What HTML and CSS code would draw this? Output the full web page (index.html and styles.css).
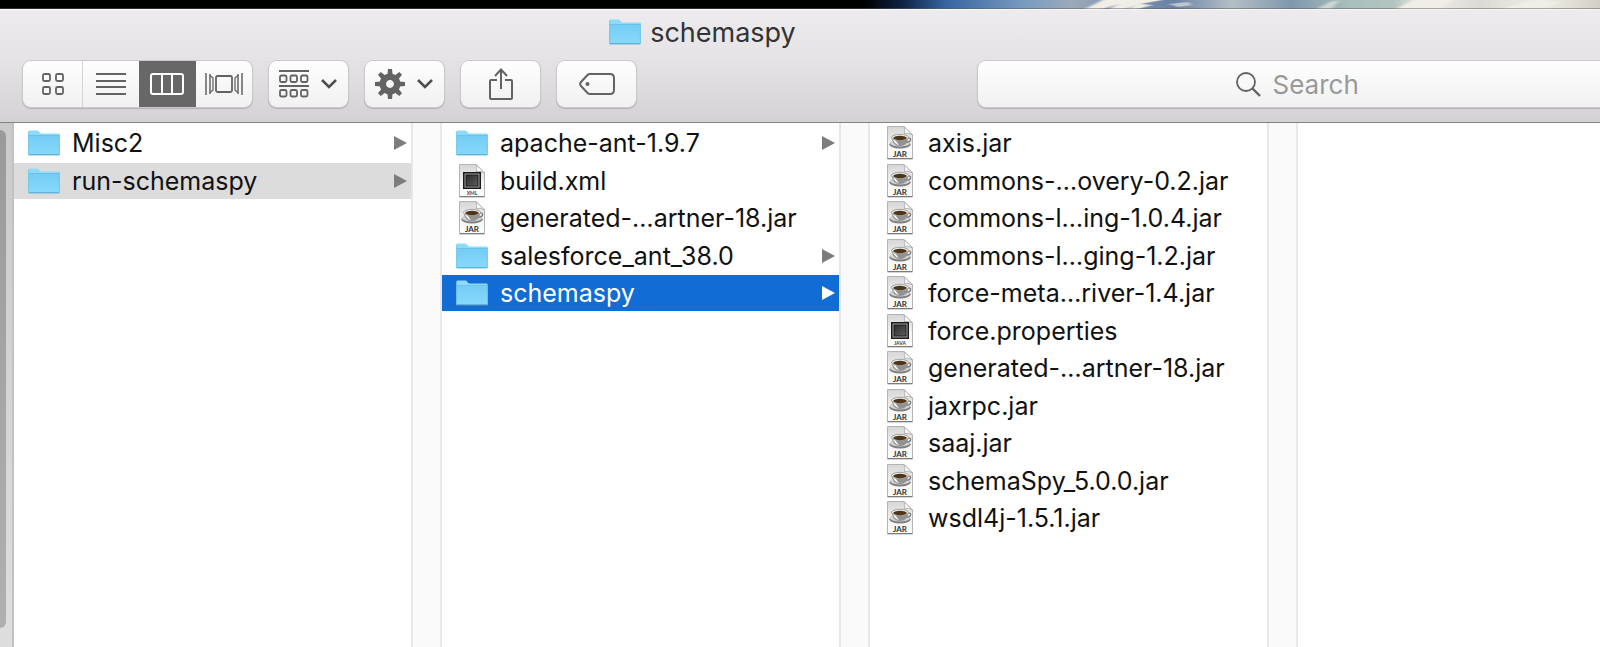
FILE: index.html
```html
<!DOCTYPE html>
<html lang="en">
<head>
  <meta charset="UTF-8">
  <meta name="viewport" content="width=device-width, initial-scale=1.0">
  <title>schemaspy</title>
  <link rel="stylesheet" href="styles.css">
</head>
<body>

  <!-- shared icons -->
  <svg class="sprite" aria-hidden="true">
    <defs>
      <linearGradient id="folderFill" x1="0" y1="0" x2="0" y2="1">
        <stop offset="0" stop-color="#74cdf5"/>
        <stop offset="1" stop-color="#87d9fa"/>
      </linearGradient>
      <linearGradient id="pageFill" x1="0" y1="0" x2="0" y2="1">
        <stop offset="0" stop-color="#d6d6d6"/>
        <stop offset="0.6" stop-color="#f4f4f4"/>
        <stop offset="1" stop-color="#ffffff"/>
      </linearGradient>
      <linearGradient id="chipFill" x1="0" y1="0" x2="1" y2="1">
        <stop offset="0" stop-color="#2c2c2c"/>
        <stop offset="1" stop-color="#5c5c5c"/>
      </linearGradient>
    </defs>
    <symbol id="folder" viewBox="0 0 32 26">
      <path d="M0.5 24V1.8Q0.5 0.5 1.8 0.5H9.5Q10.3 0.5 10.8 1.2L12 2.8Q12.5 3.5 13.5 3.5H30.5Q31.5 3.5 31.5 4.5V24Q31.5 25 30.5 25H1.5Q0.5 25 0.5 24Z" fill="#90daf9"/>
      <path d="M0.5 6H31.5V24Q31.5 25 30.5 25H1.5Q0.5 25 0.5 24Z" fill="url(#folderFill)"/>
      <path d="M0.5 5.5H31.5" stroke="#62bde6" stroke-width="0.8"/>
      <path d="M0.5 24.8H31.5" stroke="#56abd2" stroke-width="1.2"/>
      <path d="M0.6 1.5V24.5M31.4 4.5V24.5" stroke="#6cc3ea" stroke-width="0.8"/>
    </symbol>
    <symbol id="page" viewBox="0 0 26 34">
      <path d="M0.5 0.5H17L25.5 9V32.5H0.5Z" fill="url(#pageFill)" stroke="#b4b4b4"/>
      <path d="M0.5 32.7H25.5" stroke="#777" stroke-width="1.2"/>
      <path d="M17 0.5Q18.5 4.5 17.3 7.5Q21 6.3 25.5 9Z" fill="#fff" stroke="#a6a6a6" stroke-width="0.8"/>
    </symbol>
    <symbol id="jar" viewBox="0 0 26 34">
      <use href="#page"/>
      <ellipse cx="13" cy="18.2" rx="10.6" ry="4.3" fill="#7e7e7e"/>
      <ellipse cx="13" cy="17" rx="10" ry="3.6" fill="#d2d2d2"/>
      <path d="M20 12Q24.2 11.4 23.6 14Q22.8 16.2 18.5 16.4" fill="none" stroke="#777" stroke-width="1.3"/>
      <path d="M4.5 11Q5.5 20 13 20Q20.5 20 21.5 11Z" fill="#929292"/>
      <path d="M5.5 13Q8 18.5 12 19Q8.8 16 8.5 13Z" fill="#f6f6f6"/>
      <ellipse cx="13" cy="11.5" rx="8.5" ry="3.2" fill="#ededed" stroke="#858585" stroke-width="0.7"/>
      <ellipse cx="13" cy="12" rx="6.8" ry="2.2" fill="#4e3517"/>
      <text x="13" y="30.8" class="tag-text">JAR</text>
    </symbol>
    <symbol id="chip" viewBox="0 0 26 34">
      <use href="#page"/>
      <rect x="4" y="8" width="18" height="17" fill="#1a1a1a"/>
      <rect x="6" y="10" width="14" height="13" fill="none" stroke="#a5a5a5"/>
      <rect x="7.5" y="11.5" width="11" height="10" fill="url(#chipFill)"/>
    </symbol>
    <symbol id="xml" viewBox="0 0 26 34">
      <use href="#chip"/>
      <text x="13" y="30.5" class="small-text">XML</text>
    </symbol>
    <symbol id="java" viewBox="0 0 26 34">
      <use href="#chip"/>
      <text x="13" y="30.5" class="small-text">JAVA</text>
    </symbol>
    <symbol id="chevron" viewBox="0 0 18 12">
      <path d="M2 2L9 9L16 2" fill="none" stroke="#4f4f4f" stroke-width="2.6"/>
    </symbol>
  </svg>

  <div class="desktop">
    <svg viewBox="0 0 740 9" preserveAspectRatio="none" aria-hidden="true">
      <defs>
        <linearGradient id="sky">
          <stop offset="0" stop-color="#000"/>
          <stop offset="0.05" stop-color="#0d2140"/>
          <stop offset="0.11" stop-color="#3564a0"/>
          <stop offset="0.22" stop-color="#7a9cc2"/>
          <stop offset="0.28" stop-color="#9ba9ba"/>
          <stop offset="0.42" stop-color="#6a82a6"/>
          <stop offset="0.5" stop-color="#b4bfc6"/>
          <stop offset="0.58" stop-color="#7f98ac"/>
          <stop offset="0.66" stop-color="#a9bfbd"/>
          <stop offset="0.72" stop-color="#b3c5bf"/>
          <stop offset="0.76" stop-color="#efeeea"/>
          <stop offset="0.84" stop-color="#dcdad4"/>
          <stop offset="0.92" stop-color="#f0efe6"/>
          <stop offset="1" stop-color="#d2cfc6"/>
        </linearGradient>
        <filter id="soft"><feGaussianBlur stdDeviation="2 0.5"/></filter>
      </defs>
      <rect width="740" height="9" fill="url(#sky)"/>
      <g filter="url(#soft)" fill="#f0eee6">
        <path d="M222 9L240 0H300L278 4L262 9H246L256 4L240 9ZM264 9L278 4L290 5L275 9Z"/>
        <path d="M306 4L326 2L330 5L316 7ZM455 9L468 2L478 0L470 9Z" opacity="0.6"/>
        <path d="M535 9L552 0H592L580 9ZM640 9L662 3L700 2L680 9Z"/>
      </g>
    </svg>
  </div>

  <header class="window-header">
    <div class="title">
      <svg class="folder-icon" aria-hidden="true"><use href="#folder"/></svg>
      <h1>schemaspy</h1>
    </div>

    <div class="toolbar">
      <div class="view-switch">
        <button type="button" class="view-icons" aria-label="Icon view">
          <svg width="22" height="22" viewBox="0 0 22 22" fill="none" stroke="#636363" stroke-width="1.8">
            <rect x="1" y="1" width="7" height="7" rx="1.5"/>
            <rect x="14" y="1" width="7" height="7" rx="1.5"/>
            <rect x="1" y="14" width="7" height="7" rx="1.5"/>
            <rect x="14" y="14" width="7" height="7" rx="1.5"/>
          </svg>
        </button>
        <button type="button" aria-label="List view">
          <svg width="30" height="22" viewBox="0 0 30 22" stroke="#636363" stroke-width="2">
            <path d="M0 1H30M0 8H30M0 14H30M0 21H30"/>
          </svg>
        </button>
        <button type="button" class="active" aria-label="Column view" aria-pressed="true">
          <svg width="34" height="22" viewBox="0 0 34 22" fill="none" stroke="#fff" stroke-width="2">
            <rect x="1" y="1" width="32" height="20" rx="2"/>
            <path d="M12 1V21M22 1V21"/>
          </svg>
        </button>
        <button type="button" aria-label="Cover Flow view">
          <svg width="38" height="22" viewBox="0 0 38 22" fill="none" stroke="#636363" stroke-width="1.8">
            <rect x="11" y="3" width="16" height="16" rx="1.5"/>
            <path d="M1 0V22M5 1V21M37 0V22M33 1V21" stroke-width="1.5"/>
            <path d="M5 2.5L8 5V17L5 19.5M33 2.5L30 5V17L33 19.5" stroke-width="1.3"/>
          </svg>
        </button>
      </div>

      <button type="button" class="tool" aria-label="Arrange items">
        <svg width="30" height="28" viewBox="0 0 30 28" fill="none" stroke="#636363" stroke-width="1.8">
          <path d="M0 1H30M0 16H30"/>
          <rect x="1" y="5.5" width="6.5" height="6.5" rx="1.5"/>
          <rect x="11.5" y="5.5" width="6.5" height="6.5" rx="1.5"/>
          <rect x="22" y="5.5" width="6.5" height="6.5" rx="1.5"/>
          <rect x="1" y="20" width="6.5" height="6.5" rx="1.5"/>
          <rect x="11.5" y="20" width="6.5" height="6.5" rx="1.5"/>
          <rect x="22" y="20" width="6.5" height="6.5" rx="1.5"/>
        </svg>
        <svg class="chevron"><use href="#chevron"/></svg>
      </button>

      <button type="button" class="tool" aria-label="Actions">
        <svg width="30" height="30" viewBox="-15 -15 30 30" fill="#636363">
          <g id="teeth">
            <path d="M-2.6 -9L-2 -15H2L2.6 -9ZM-2.6 9L-2 15H2L2.6 9ZM-9 -2.6L-15 -2V2L-9 2.6ZM9 -2.6L15 -2V2L9 2.6Z"/>
          </g>
          <use href="#teeth" transform="rotate(45)"/>
          <circle r="7.2" fill="none" stroke="#636363" stroke-width="6.5"/>
        </svg>
        <svg class="chevron"><use href="#chevron"/></svg>
      </button>

      <button type="button" class="tool" aria-label="Share">
        <svg width="24" height="32" viewBox="0 0 24 32" fill="none" stroke="#636363" stroke-width="2">
          <path d="M8 12H2Q1 12 1 13V30Q1 31 2 31H22Q23 31 23 30V13Q23 12 22 12H16"/>
          <path d="M12 21V2M6 8L12 1.5L18 8"/>
        </svg>
      </button>

      <button type="button" class="tool" aria-label="Edit tags">
        <svg width="36" height="22" viewBox="0 0 36 22" fill="none" stroke="#636363" stroke-width="2">
          <path d="M11 1H31Q35 1 35 5V17Q35 21 31 21H11Q9.5 21 8.5 20L2 13Q0.3 11 2 9L8.5 2Q9.5 1 11 1Z"/>
          <circle cx="8.5" cy="11" r="2" fill="#636363" stroke="none"/>
        </svg>
      </button>

      <label class="search">
        <svg width="25" height="25" viewBox="0 0 25 25" fill="none" stroke="#636363" stroke-width="1.8">
          <circle cx="10" cy="10" r="9"/>
          <path d="M16.5 16.5L24 24" stroke-width="2.4"/>
        </svg>
        <input type="search" placeholder="Search" aria-label="Search">
      </label>
    </div>
  </header>

  <main class="browser">
    <div class="sidebar-edge"><div class="thumb"></div></div>

    <ul class="column">
      <li><a href="#" class="row"><svg class="folder-icon"><use href="#folder"/></svg><span>Misc2</span><i class="arrow"></i></a></li>
      <li><a href="#" class="row open"><svg class="folder-icon"><use href="#folder"/></svg><span>run-schemaspy</span><i class="arrow"></i></a></li>
    </ul>
    <div class="gutter"></div>

    <ul class="column">
      <li><a href="#" class="row"><svg class="folder-icon"><use href="#folder"/></svg><span>apache-ant-1.9.7</span><i class="arrow"></i></a></li>
      <li><a href="#" class="row"><svg class="file-icon"><use href="#xml"/></svg><span>build.xml</span></a></li>
      <li><a href="#" class="row"><svg class="file-icon"><use href="#jar"/></svg><span>generated-…artner-18.jar</span></a></li>
      <li><a href="#" class="row"><svg class="folder-icon"><use href="#folder"/></svg><span>salesforce_ant_38.0</span><i class="arrow"></i></a></li>
      <li><a href="#" class="row selected"><svg class="folder-icon"><use href="#folder"/></svg><span>schemaspy</span><i class="arrow"></i></a></li>
    </ul>
    <div class="gutter"></div>

    <ul class="column">
      <li><a href="#" class="row"><svg class="file-icon"><use href="#jar"/></svg><span>axis.jar</span></a></li>
      <li><a href="#" class="row"><svg class="file-icon"><use href="#jar"/></svg><span>commons-…overy-0.2.jar</span></a></li>
      <li><a href="#" class="row"><svg class="file-icon"><use href="#jar"/></svg><span>commons-l…ing-1.0.4.jar</span></a></li>
      <li><a href="#" class="row"><svg class="file-icon"><use href="#jar"/></svg><span>commons-l…ging-1.2.jar</span></a></li>
      <li><a href="#" class="row"><svg class="file-icon"><use href="#jar"/></svg><span>force-meta…river-1.4.jar</span></a></li>
      <li><a href="#" class="row"><svg class="file-icon"><use href="#java"/></svg><span>force.properties</span></a></li>
      <li><a href="#" class="row"><svg class="file-icon"><use href="#jar"/></svg><span>generated-…artner-18.jar</span></a></li>
      <li><a href="#" class="row"><svg class="file-icon"><use href="#jar"/></svg><span>jaxrpc.jar</span></a></li>
      <li><a href="#" class="row"><svg class="file-icon"><use href="#jar"/></svg><span>saaj.jar</span></a></li>
      <li><a href="#" class="row"><svg class="file-icon"><use href="#jar"/></svg><span>schemaSpy_5.0.0.jar</span></a></li>
      <li><a href="#" class="row"><svg class="file-icon"><use href="#jar"/></svg><span>wsdl4j-1.5.1.jar</span></a></li>
    </ul>
    <div class="gutter"></div>

    <div class="preview"></div>
  </main>

</body>
</html>
```
FILE: styles.css
```css
* {
  box-sizing: border-box;
}

body {
  margin: 0;
  min-height: 100vh;
  display: flex;
  flex-direction: column;
  overflow: hidden;
  font-family: Inter, "Liberation Sans", sans-serif;
  font-size: 25px;
  color: #111;
  background: #fff;
}

.sprite {
  position: absolute;
  width: 40px;
  height: 40px;
  pointer-events: none;
}

.tag-text {
  font-family: Lato, sans-serif;
  font-size: 8px;
  font-weight: bold;
  text-anchor: middle;
  fill: #333;
}

.small-text {
  font-family: Lato, sans-serif;
  font-size: 5px;
  font-weight: bold;
  text-anchor: middle;
  fill: #444;
}

/* strip of wallpaper above the window */
.desktop {
  height: 9px;
  background: #000;
}

.desktop svg {
  display: block;
  width: 46%;
  height: 9px;
  margin-left: auto;
}

/* title + toolbar */
.window-header {
  height: 114px;
  background: linear-gradient(#edebee, #e6e4e7 40%, #d4d2d5);
  border-top: 1px solid #f8f8f8;
  border-bottom: 1px solid #858387;
  box-shadow: 0 -1px 0 rgba(90, 90, 90, 0.5);
}

.title {
  display: flex;
  align-items: center;
  justify-content: center;
  gap: 9px;
  height: 44px;
  margin-right: 195px;
}

.title h1 {
  margin: 0;
  font-size: 27px;
  font-weight: 400;
  color: #333;
}

.folder-icon {
  width: 32px;
  height: 26px;
  flex: none;
}

.toolbar {
  display: flex;
  gap: 17px;
  padding-left: 23px;
  margin-right: -18px;
  margin-top: 7px;
}

.toolbar button {
  display: flex;
  align-items: center;
  justify-content: center;
  padding: 0;
  border: none;
  background: none;
}

.view-switch,
.toolbar .tool,
.search {
  height: 46px;
  border-radius: 8px;
  background: linear-gradient(#fefefe, #f1f1f1);
  box-shadow: 0 0 0 1px #cbc9cc, 0 1px 1px 1px #b3b1b4;
}

.view-switch {
  display: flex;
  width: 229px;
}

.view-switch button {
  flex: 1;
}

.view-switch .view-icons {
  flex: none;
  width: 60px;
  border-right: 1px solid #d4d4d4;
}

.view-switch .active {
  background: #676767;
}

.toolbar .tool {
  width: 79px;
  gap: 11px;
}

.chevron {
  width: 18px;
  height: 12px;
}

.search {
  display: flex;
  align-items: center;
  justify-content: center;
  gap: 12px;
  width: 40vw;
  margin-left: auto;
}

.search input {
  width: 88px;
  padding: 0;
  border: none;
  outline: none;
  background: none;
  appearance: none;
  font-family: inherit;
  font-size: 26px;
  color: #333;
}

.search input::placeholder {
  color: #999;
}

.search input::-webkit-search-cancel-button {
  display: none;
}

/* column browser */
.browser {
  display: flex;
  flex: 1;
}

.sidebar-edge {
  flex: none;
  width: 14px;
  padding: 7px 0 19px;
  background: linear-gradient(#cacaca, #dedede);
  border-right: 2px solid #c2c2c2;
}

.thumb {
  width: 6px;
  height: 100%;
  border-radius: 0 6px 6px 0;
  background: linear-gradient(#9a9a9a, #b0b0b0);
}

.column {
  flex: none;
  width: 397px;
  margin: 0;
  padding: 2px 0 0;
  list-style: none;
  display: grid;
  grid-auto-rows: 38px 37px;
  align-content: start;
}

.row {
  display: flex;
  align-items: center;
  height: 36px;
  padding: 0 4px 0 14px;
  color: inherit;
  text-decoration: none;
  white-space: nowrap;
}

.row span {
  flex: 1;
  margin-left: 12px;
}

.file-icon {
  width: 26px;
  height: 34px;
  margin: 0 3px;
  flex: none;
}

.row.open {
  background: #dcdcdc;
}

.row.selected {
  background: #116cd6;
  color: #fff;
}

.arrow {
  border-left: 13px solid #7d7d7d;
  border-top: 7px solid transparent;
  border-bottom: 7px solid transparent;
}

.selected .arrow {
  border-left-color: #fff;
}

.gutter {
  flex: none;
  width: 31px;
  background: #fafafa;
  border-left: 2px solid #e7e7e7;
  border-right: 2px solid #e9e9e9;
}

.preview {
  flex: 1;
}
```
